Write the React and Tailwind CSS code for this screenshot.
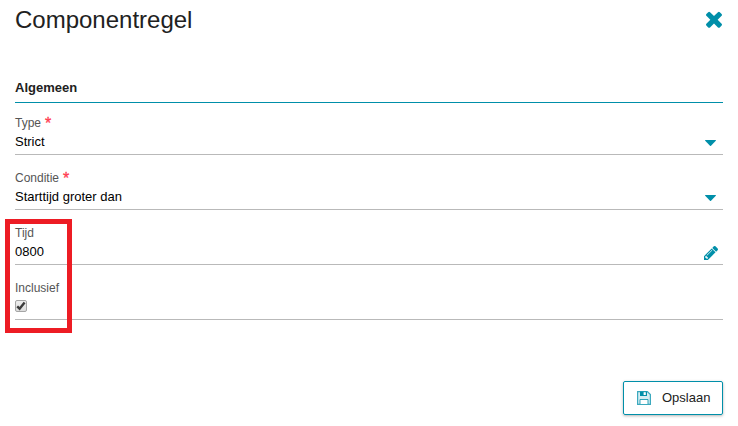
const ICONS = {
  close: {
    box: "302 234 1188 1188",
    d: "M1490 1322q0 40-28 68l-136 136q-28 28-68 28t-68-28l-294-294-294 294q-28 28-68 28t-68-28l-136-136q-28-28-28-68t28-68l294-294-294-294q-28-28-28-68t28-68l136-136q28-28 68-28t68 28l294 294 294-294q28-28 68-28t68 28l136 136q28 28 28 68t-28 68l-294 294 294 294q28 28 28 68z",
  },
  pencil: {
    box: "128 149 1515 1515",
    d: "M491 1536l91-91-235-235-91 91v107h128v128h107zm523-928q0-22-22-22-10 0-17 7l-542 542q-7 7-7 17 0 22 22 22 10 0 17-7l542-542q7-7 7-17zm-54-192l416 416-832 832h-416v-416zm683 96q0 53-37 90l-166 166-416-416 166-165q36-38 90-38 53 0 91 38l235 234q37 39 37 91z",
  },
  caret: {
    box: "0 0 11 6",
    d: "M0.3 0h10.4q0.4 0.3 0.1 0.8L6 5.7q-0.5 0.4-1 0L0.2 0.8Q-0.1 0.3 0.3 0z",
  },
};

function Icon({ name, className }) {
  return (
    <svg viewBox={ICONS[name].box} fill="currentColor" className={className}>
      <path d={ICONS[name].d} />
    </svg>
  );
}

function SaveIcon() {
  return (
    <svg viewBox="0 0 14 14" fill="none" stroke="currentColor" className="w-3.5 h-3.5 text-[#008fa9]">
      <path d="M0.6 0.6h9.8l3 3v9.8H0.6z" fill="#d5edf2" strokeOpacity="0.75" strokeWidth="1.2" />
      <path d="M3 13V8.5h8V13" fill="#fff" strokeOpacity="0.8" />
      <path d="M3 0.5h7v4.5H3z" fill="currentColor" stroke="none" />
      <path d="M6.6 1.2h2.2v2.8H6.6z" fill="#fff" stroke="none" />
    </svg>
  );
}

function Field({ label, required, icon, iconClass, children }) {
  return (
    <div className="flex h-[55px] items-end justify-between border-b border-[#b9b9b9]">
      <div className="flex h-[39px] flex-col">
        <div className="flex h-4 text-[12px] leading-4 text-[#555]">
          {label}
          {required && <span className="ml-1 text-[16px] leading-[18px] text-[#ff3b4e] [-webkit-text-stroke:0.3px_#ff3b4e]">*</span>}
        </div>
        <div className="h-5 pt-px text-[13px] leading-5 text-black">{children}</div>
      </div>
      {icon && <Icon name={icon} className={iconClass} />}
    </div>
  );
}

export default function App() {
  return (
    <div className="relative h-[426px] w-[738px] bg-white px-[15px] font-['Liberation_Sans',Arial,sans-serif]">
      <header className="flex h-[78px] justify-between pt-1">
        <h1 className="text-[24px] leading-8 text-[#212121]">Componentregel</h1>
        <Icon name="close" className="mt-[5.5px] mr-px h-4 w-4 overflow-visible text-[#008fa9]" />
      </header>

      <h2 className="h-[25px] border-b border-[#008fa9] text-[13px] font-bold leading-5 text-[#212121]">
        Algemeen
      </h2>

      <div className="-mt-[3px]">
        <Field label="Type" required icon="caret" iconClass="mb-2 mr-[7.5px] h-1.5 w-[11px] text-[#008fa9]">
          Strict
        </Field>
        <Field label="Conditie" required icon="caret" iconClass="mb-2 mr-[7.5px] h-1.5 w-[11px] text-[#008fa9]">
          Starttijd groter dan
        </Field>
        <Field label="Tijd" icon="pencil" iconClass="mb-1 mr-[5px] h-3.5 w-3.5 text-[#008fa9]">
          0800
        </Field>
        <Field label="Inclusief">
          <span className="mt-[3px] flex h-3 w-3 items-center justify-center rounded-[2px] border border-[#a5a5a5] bg-linear-to-b from-[#eee] to-[#ddd]">
            <svg viewBox="0 0 10 10" fill="none" stroke="#3c3c3c" strokeWidth="2.4" className="h-2.5 w-2.5 shrink-0">
              <path d="M1.2 5.4l2.4 2.3L8.6 1.4" />
            </svg>
          </span>
        </Field>
      </div>

      <footer className="flex justify-end pt-[61px]">
        <button className="flex h-[34px] w-[100px] items-center rounded-[2px] border border-[#008fa9] pl-[13px] text-[13px] text-[#212121] shadow-[0_1px_3px_rgba(0,0,0,0.3)]">
          <SaveIcon />
          <span className="ml-[11px]">Opslaan</span>
        </button>
      </footer>

      {/* markering rond Tijd en Inclusief */}
      <div className="absolute left-[5px] top-[219px] h-[114px] w-[67px] border-5 border-[#ed1c24]" />
    </div>
  );
}
